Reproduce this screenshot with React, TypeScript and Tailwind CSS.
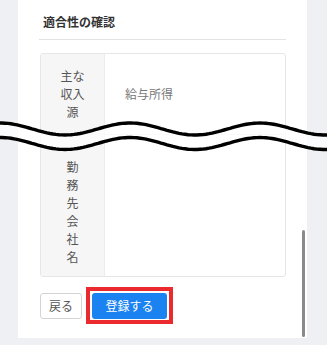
import React from "react";

const jp = { fontFamily: '"Noto Sans CJK JP", "Noto Sans", sans-serif' };

// points of one wave across the window
function wave(center: number, amp: number) {
  const pts: [number, number][] = [];
  for (let x = -4; x <= 331; x += 3) {
    const y = center + amp * Math.sin((2 * Math.PI * (x - 32.5)) / 130);
    pts.push([x, y]);
  }
  return pts;
}

function BreakMark() {
  const a = wave(11, 6);
  const b = wave(25.5, 6);
  const line = (p: [number, number][]) => p.map(([x, y], i) => `${i ? "L" : "M"}${x.toFixed(1)} ${y.toFixed(1)}`).join(" ");
  const band = line(a) + " " + [...b].reverse().map(([x, y]) => `L${x.toFixed(1)} ${y.toFixed(1)}`).join(" ") + " Z";
  return (
    <svg className="absolute left-0 top-[118px]" width="327" height="40" viewBox="0 0 327 40">
      <path d={band} fill="#ffffff" fillOpacity="0.7" />
      <path d={line(a)} fill="none" stroke="#000" strokeWidth="3.4" strokeLinecap="round" />
      <path d={line(b)} fill="none" stroke="#000" strokeWidth="3.4" strokeLinecap="round" />
    </svg>
  );
}

export default function App() {
  return (
    <div className="relative w-[327px] h-[345px] overflow-hidden bg-[#eef0f3] pl-[18px] pr-[20px]" style={jp}>
      <div className="h-[338px] bg-white px-[21px]">
        <div className="pt-[13px] pb-[8px] border-b border-[#e3e3e3]">
          <h2 className="ml-[4px] text-[12px] leading-[18px] font-bold text-[#333]">適合性の確認</h2>
        </div>

        <div className="mt-[13px] ml-px border border-[#e6e6e6] rounded-[3px] overflow-hidden">
          <div className="flex border-b border-[#ececec]">
            <div className="w-[64px] shrink-0 bg-[#f6f6f6] border-r border-[#ececec] pt-[13px] pb-[13px] text-center text-[12px] leading-[18px] text-[#555]">
              主な<br />収入<br />源
            </div>
            <div className="flex items-center pl-[20px] text-[12px] text-[#777]">給与所得</div>
          </div>
          <div className="flex">
            <div className="w-[64px] shrink-0 bg-[#f6f6f6] border-r border-[#ececec] pt-[23px] pb-[10px] text-center text-[12px] leading-[18px] text-[#555]">
              勤<br />務<br />先<br />会<br />社<br />名
            </div>
            <div className="flex-1" />
          </div>
        </div>

        <div className="mt-[15px] ml-px flex items-center gap-[10px]">
          <button className="h-[26px] w-[42px] rounded-[3px] border border-[#d4d4d4] bg-white text-[12px] text-[#555]">戻る</button>
          <div className="relative">
            <button className="h-[26px] w-[75px] rounded-[3px] bg-[#1b82f1] text-[12px] text-white">登録する</button>
            <span className="absolute -top-[5px] -bottom-[5px] -left-[6px] -right-[6px] border-4 border-[#ea2a2f]" />
          </div>
        </div>
      </div>

      <div className="absolute left-[302px] top-[230px] h-[107px] w-[3px] rounded-full bg-[#8a8a8a]" />
      <BreakMark />
    </div>
  );
}
